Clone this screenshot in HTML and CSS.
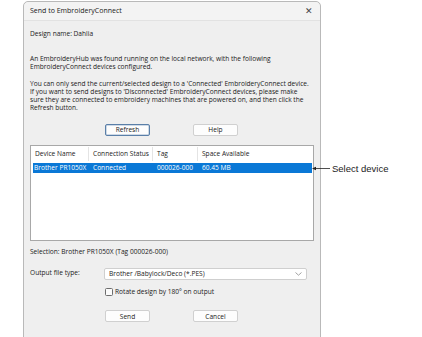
FILE: index.html
```html
<!DOCTYPE html>
<html lang="en">
<head>
    <meta charset="UTF-8">
    <title>Send to EmbroideryConnect</title>
    <link rel="stylesheet" href="styles.css">
</head>
<body>
    <div class="dialog">
        <!-- title bar -->
        <div class="title-bar">
            <span>Send to EmbroideryConnect</span>
            <span class="close">&#x2715;</span>
        </div>

        <div class="dialog-body">
            <p class="design-name">Design name: Dahlia</p>

            <p class="info">An EmbroideryHub was found running on the local network, with the following<br>EmbroideryConnect devices configured.</p>

            <p class="info second">You can only send the current/selected design to a 'Connected' EmbroideryConnect device.<br>If you want to send designs to 'Disconnected' EmbroideryConnect devices, please make<br>sure they are connected to embroidery machines that are powered on, and then click the<br>Refresh button.</p>

            <div class="btn-row top-buttons">
                <button class="btn default">Refresh</button>
                <button class="btn">Help</button>
            </div>

            <!-- device list -->
            <div class="device-list">
                <div class="list-row list-head">
                    <span class="col c1">Device Name</span>
                    <span class="col c2">Connection Status</span>
                    <span class="col c3">Tag</span>
                    <span class="col c4">Space Available</span>
                </div>
                <div class="list-row selected">
                    <span class="col c1">Brother PR1050X</span>
                    <span class="col c2">Connected</span>
                    <span class="col c3">000026-000</span>
                    <span class="col c4">60.45 MB</span>
                </div>
            </div>

            <p class="selection">Selection: Brother PR1050X (Tag 000026-000)</p>

            <div class="output-row">
                <span class="output-label">Output file type:</span>
                <div class="select-box">
                    <span>Brother /Babylock/Deco (*.PES)</span>
                    <svg class="chevron" width="7" height="4" viewBox="0 0 7 4"><path d="M0.5 0.5 L3.5 3.2 L6.5 0.5" fill="none" stroke="#8a8a8a" stroke-width="0.8"/></svg>
                </div>
            </div>

            <label class="check-row">
                <span class="check"></span>
                <span>Rotate design by 180° on output</span>
            </label>

            <div class="btn-row bottom-buttons">
                <button class="btn">Send</button>
                <button class="btn">Cancel</button>
            </div>
        </div>

        <!-- callout -->
        <div class="callout">
            <svg width="18" height="5" viewBox="0 0 18 5"><path d="M0 2.5 L4 0.8 L4 4.2 Z" fill="#222"/><path d="M3 2.5 H18" stroke="#222" stroke-width="0.8"/></svg>
            <span>Select device</span>
        </div>
    </div>
</body>
</html>
```

FILE: styles.css
```css
:root {
    --dialog-bg: #efefef;
    --border: #b9b9b9;
    --text: #1a1a1a;
    --select: #0a78d6;
}

* {
    box-sizing: border-box;
    margin: 0;
    padding: 0;
}

body {
    background: #ffffff;
    font-family: 'Open Sans', 'Noto Sans', sans-serif;
    color: var(--text);
    font-size: 6.6px;
    line-height: 7.8px;
    width: 422px;
    height: 337px;
    overflow: hidden;
}

/* dialog frame */
.dialog {
    position: relative;
    margin: 1px 0 0 23px;
    width: 298px;
    height: 345px;
    background: var(--dialog-bg);
    border: 1px solid var(--border);
    border-radius: 5px 5px 0 0;
}

.title-bar {
    height: 19px;
    display: flex;
    align-items: center;
    justify-content: space-between;
    padding: 0 7px 0 6px;
    background: #f3f3f3;
    border-bottom: 1px solid #e2e2e2;
    border-radius: 5px 5px 0 0;
    font-size: 7px;
}

.close {
    font-size: 9px;
    font-weight: 300;
    color: #444;
}

.dialog-body {
    padding: 9px 6px 0 6px;
}

.info {
    margin-top: 17px;
}

.info.second {
    margin-top: 10px;
}

/* buttons */
.btn-row {
    display: flex;
    gap: 43px;
    padding-left: 75px;
}

.top-buttons {
    margin-top: 12px;
}

.btn {
    width: 45px;
    height: 12px;
    background: #fdfdfd;
    border: 1px solid #d0d0d0;
    border-radius: 2px;
    font-family: inherit;
    font-size: 6.6px;
    color: var(--text);
}

.btn.default {
    border: 1px solid #5a7fa8;
    box-shadow: inset 0 0 0 0.5px #9fb6cf;
}

/* device list */
.device-list {
    margin-top: 9px;
    height: 96px;
    background: #ffffff;
    border: 1px solid #a8a8a8;
    padding: 1px 1px 0 2px;
}

.list-row {
    display: flex;
    height: 10px;
    align-items: center;
}

.list-head {
    height: 14px;
    margin-bottom: 2px;
}

.col {
    padding-left: 2px;
    white-space: nowrap;
}

.list-head .col {
    height: 14px;
    display: flex;
    align-items: center;
    border-right: 1px solid #e4e4e4;
}

.c1 { width: 56px; }
.c2 { width: 64px; padding-left: 4px; }
.c3 { width: 45px; padding-left: 4px; }
.c4 { flex: 1; padding-left: 4px; }

.list-head .c4 {
    border-right: none;
}

.selected {
    background: var(--select);
    color: #ffffff;
}

.selected .c1 {
    padding-left: 1px;
}

.selection {
    margin-top: 7px;
}

/* output options */
.output-row {
    display: flex;
    margin-top: 13px;
}

.output-label {
    width: 74px;
    padding-top: 1px;
}

.select-box {
    width: 203px;
    height: 12px;
    background: #ffffff;
    border: 1px solid #cfcfcf;
    border-radius: 2px;
    display: flex;
    align-items: center;
    justify-content: space-between;
    padding: 0 4px 0 4px;
}

.check-row {
    display: flex;
    align-items: center;
    gap: 2px;
    margin-top: 8px;
    padding-left: 75px;
}

.check {
    width: 8px;
    height: 8px;
    border: 1px solid #6d6d6d;
    border-radius: 1.5px;
    background: #fbfbfb;
}

.bottom-buttons {
    margin-top: 14px;
}

/* annotation */
.callout {
    position: absolute;
    left: 288px;
    top: 163px;
    display: flex;
    align-items: center;
    gap: 2px;
    white-space: nowrap;
    font-family: 'Liberation Sans', Arial, sans-serif;
    font-size: 9.5px;
    color: #222;
}
```
